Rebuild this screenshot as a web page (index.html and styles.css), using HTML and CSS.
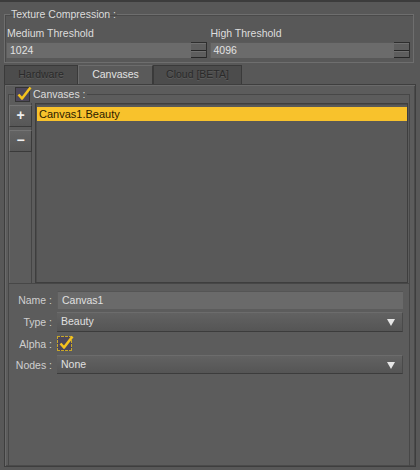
FILE: index.html
```html
<!DOCTYPE html>
<html>
<head>
<meta charset="utf-8">
<link rel="stylesheet" href="styles.css">
</head>
<body>
<div class="app">
  <fieldset class="group compression">
    <legend class="group-title">Texture Compression :</legend>
    <div class="thresholds">
      <div class="threshold">
        <div class="field-label">Medium Threshold</div>
        <div class="spinbox">
          <span class="spin-value">1024</span>
          <span class="spinner"><span class="spin-btn"></span><span class="spin-btn"></span></span>
        </div>
      </div>
      <div class="threshold">
        <div class="field-label">High Threshold</div>
        <div class="spinbox">
          <span class="spin-value">4096</span>
          <span class="spinner"><span class="spin-btn"></span><span class="spin-btn"></span></span>
        </div>
      </div>
    </div>
  </fieldset>

  <div class="tabs">
    <div class="tab tab-hardware">Hardware</div>
    <div class="tab tab-canvases active">Canvases</div>
    <div class="tab tab-cloud">Cloud [BETA]</div>
  </div>

  <div class="tab-panel">
    <fieldset class="group canvases">
      <legend class="group-title check-title">
        <span class="checkbox"><svg width="16" height="16" viewBox="0 0 16 16"><path d="M2.5 8.5 L6 12.5 L14.5 1.5" fill="none" stroke="#f4c21e" stroke-width="2.6" stroke-linejoin="round"/></svg></span>
        <span>Canvases :</span>
      </legend>
      <div class="canvas-body">
        <div class="list-tools">
          <div class="tool">+</div>
          <div class="tool">&minus;</div>
        </div>
        <div class="list">
          <div class="list-item selected">Canvas1.Beauty</div>
        </div>
      </div>
    </fieldset>

    <div class="props">
      <div class="prop-label">Name :</div>
      <div class="text-field">Canvas1</div>

      <div class="prop-label">Type :</div>
      <div class="combo">Beauty<span class="arrow"></span></div>

      <div class="prop-label">Alpha :</div>
      <div class="alpha-cell"><span class="checkbox focus"><svg width="16" height="16" viewBox="0 0 16 16"><path d="M2.5 8.5 L6 12.5 L14.5 1.5" fill="none" stroke="#f4c21e" stroke-width="2.6" stroke-linejoin="round"/></svg></span></div>

      <div class="prop-label">Nodes :</div>
      <div class="combo">None<span class="arrow"></span></div>
    </div>
  </div>
</div>
</body>
</html>
```
FILE: styles.css
```css
* { box-sizing: border-box; }

html, body {
  margin: 0;
  padding: 0;
  background: #585858;
}

body {
  font-family: "Liberation Sans", Arial, sans-serif;
  font-size: 10.5px;
  color: #dcdcdc;
}

.app {
  width: 420px;
  height: 470px;
  border-top: 2px solid #3c3c3c;
  padding: 0 4px 3px 4px;
  display: flex;
  flex-direction: column;
  background: #585858;
}

/* group boxes */
.group {
  margin: 0;
  border: 1px solid #6e6e6e;
  box-shadow: inset 1px 1px 0 #4a4a4a;
}

.group-title {
  line-height: 13px;
  padding: 0 1px;
  margin-left: 4px;
  color: #dcdcdc;
}

.compression {
  margin: 6px 2px 0 0;
  padding: 0 3px 4px 1px;
}

.thresholds {
  margin-top: 6px;
  display: grid;
  grid-template-columns: 1fr 1fr;
  column-gap: 3px;
}

.field-label {
  line-height: 13px;
  padding-left: 1px;
  color: #dedede;
}

.spinbox {
  margin-top: 2px;
  height: 16px;
  display: flex;
}

.spin-value {
  flex: 1;
  background: #6b6b6b;
  border-top: 1px solid #5a5a5a;
  border-left: 1px solid #5e5e5e;
  padding: 0 3px;
  line-height: 15px;
  color: #e2e2e2;
}

.spinner {
  width: 16px;
  display: flex;
  flex-direction: column;
  border-top: 1px solid #2e2e2e;
  border-right: 1px solid #2e2e2e;
}

.spin-btn {
  flex: 1;
  background: #5e5e5e;
  border-top: 1px solid #707070;
  border-bottom: 1px solid #262626;
}

/* tabs */
.tabs {
  margin-top: 2px;
  display: flex;
  height: 19px;
}

.tab {
  height: 19px;
  line-height: 17px;
  text-align: center;
  border: 1px solid #3a3a3a;
  border-bottom: none;
  background: #4c4c4c;
  color: #2a2a2a;
  text-shadow: 0 1px 0 #5c5c5c;
}

.tab-hardware { width: 74px; }
.tab-canvases { width: 75px; }
.tab-cloud { width: 89px; }

.tab.active {
  background: #5a5a5a;
  color: #e2e2e2;
  text-shadow: none;
  border-color: #6c6c6c #3a3a3a transparent #6c6c6c;
}

/* tab panel */
.tab-panel {
  flex: 1;
  display: flex;
  flex-direction: column;
  border: 1px solid #3e3e3e;
  box-shadow: inset 1px 1px 0 #6a6a6a, inset -1px -1px 0 #4a4a4a;
  background: #5c5c5c;
  padding: 1px 5px 0 3px;
}

.canvases {
  padding: 1px 1px 0 0;
  border-color: #474747;
  box-shadow: inset 1px 0 0 #666;
}

.check-title {
  margin-left: 5px;
  display: flex;
  align-items: center;
  gap: 3px;
  line-height: 16px;
}

.checkbox {
  width: 15px;
  height: 15px;
  display: inline-block;
  position: relative;
  background: #4d4758;
  border: 1px solid #333;
}

.checkbox svg {
  position: absolute;
  left: 0;
  top: -2px;
}

.checkbox.focus {
  border: 1px dashed #c9a828;
}

.canvas-body {
  height: 180px;
  display: flex;
  gap: 3px;
}

.list-tools {
  width: 23px;
  display: flex;
  flex-direction: column;
  gap: 3px;
  padding-top: 2px;
  border-right: 1px solid #454545;
}

.tool {
  height: 22px;
  width: 23px;
  background: linear-gradient(#636363, #575757);
  border: 1px solid;
  border-color: #747474 #3a3a3a #3a3a3a #747474;
  color: #f0f0f0;
  font-weight: bold;
  font-size: 14px;
  line-height: 19px;
  text-align: center;
}

.list {
  flex: 1;
  background: #595959;
  border: 1px solid #3e3e3e;
  box-shadow: inset 1px 1px 0 #4c4c4c;
  padding: 3px 0 0 1px;
}

.list-item {
  height: 14px;
  line-height: 14px;
  padding-left: 2px;
  font-size: 11px;
}

.list-item.selected {
  background: #f8c22c;
  color: #2b2000;
}

/* properties */
.props {
  flex: 1;
  border-left: 1px solid #474747;
  border-right: 1px solid #474747;
  padding: 7px 6px 0 0;
  display: grid;
  grid-template-columns: 43px 1fr;
  grid-template-rows: 18px 20px 17px 19px;
  column-gap: 5px;
  row-gap: 3px;
  align-content: start;
}

.prop-label {
  text-align: right;
  align-self: center;
  color: #cfcfcf;
  white-space: nowrap;
}

.text-field {
  background: #6a6a6a;
  border-top: 1px solid #555;
  border-left: 1px solid #5e5e5e;
  padding-left: 4px;
  line-height: 17px;
  color: #e0e0e0;
}

.combo {
  position: relative;
  background: linear-gradient(#626262, #555555);
  border-top: 1px solid #6c6c6c;
  border-bottom: 1px solid #3c3c3c;
  border-right: 1px solid #4a4a4a;
  padding-left: 4px;
  line-height: 17px;
  color: #e0e0e0;
}

.arrow {
  position: absolute;
  right: 7px;
  top: 6px;
  width: 0;
  height: 0;
  border-left: 4px solid transparent;
  border-right: 4px solid transparent;
  border-top: 7px solid #e6e6e6;
}

.alpha-cell {
  display: flex;
  align-items: center;
}
```
